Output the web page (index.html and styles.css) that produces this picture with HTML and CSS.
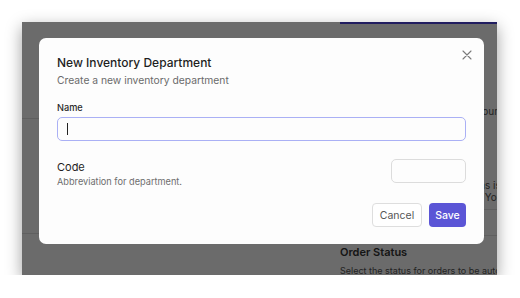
FILE: index.html
```html
<!DOCTYPE html>
<html lang="en">

<head>
    <meta charset="utf-8">
    <meta name="viewport" content="width=device-width, initial-scale=1.0">
    <title>New Inventory Department</title>
    <link rel="stylesheet" href="styles.css">
</head>

<body>
    <div class="vindue">
        <div class="app">
            <div class="venstre">
                <div class="blok1"></div>
                <div class="blok2"></div>
            </div>
            <div class="hoejre">
                <p class="tekst1">Choose the default location for your store</p>
                <p class="tekst2">Notify staff when the stock of items is low.</p>
                <p class="tekst2b">Changes apply immediately. You can</p>
                <div class="skille"></div>
                <h4>Order Status</h4>
                <p class="tekst3">Select the status for orders to be automatically</p>
            </div>
        </div>

        <div class="overlay"></div>

        <section class="dialog">
            <button class="luk" aria-label="Close">
                <svg width="10" height="10" viewBox="0 0 10 10">
                    <path d="M1 1 L9 9 M9 1 L1 9" stroke="#7a7a7a" stroke-width="1.1" fill="none" stroke-linecap="round"/>
                </svg>
            </button>

            <h2>New Inventory Department</h2>
            <p class="under">Create a new inventory department</p>

            <div class="felt">
                <label>Name</label>
                <div class="input fokus"><span class="markoer"></span></div>
            </div>

            <div class="raekke">
                <div class="kodetekst">
                    <h3>Code</h3>
                    <p>Abbreviation for department.</p>
                </div>
                <div class="input kode"></div>
            </div>

            <div class="knapper">
                <button class="annuller">Cancel</button>
                <button class="gem">Save</button>
            </div>
        </section>
    </div>
</body>

</html>
```

FILE: styles.css
```css
body {
    margin: 0;
    background-color: #ffffff;
    font-family: Inter, "Noto Sans", sans-serif;
}

.vindue {
    position: relative;
    width: 475px;
    height: 253px;
    margin: 22px 0 0 22px;
    overflow: hidden;
    box-shadow: 0 5px 15px rgba(0, 0, 0, 0.38);
}

.app {
    display: grid;
    grid-template-columns: 318px 157px;
    height: 100%;
    background-color: #ffffff;
}

.blok1 {
    height: 96px;
    border-bottom: 1px solid #e2e2e2;
}

.blok2 {
    height: 114px;
    border-bottom: 1px solid #e2e2e2;
}

.hoejre {
    border-top: 2px solid #4f46e5;
    overflow: hidden;
    white-space: nowrap;
    color: #555555;
    font-size: 10px;
}

.hoejre p {
    margin: 0;
}

.tekst1 {
    padding-top: 81px;
    line-height: 13px;
    text-indent: -12px;
}

.tekst2 {
    padding-top: 61px;
    line-height: 12px;
    text-indent: -18px;
}

.tekst2b {
    line-height: 12px;
    text-indent: 9px;
}

.skille {
    margin-top: 6px;
    height: 25px;
    border-top: 1px solid #e2e2e2;
    border-bottom: 1px solid #e2e2e2;
}

.hoejre h4 {
    margin: 9px 0 0;
    font-size: 11px;
    line-height: 14px;
    font-weight: 600;
    color: #333333;
}

.tekst3 {
    padding-top: 5px;
    line-height: 13px;
    font-size: 9px;
}

.overlay {
    position: absolute;
    inset: 0;
    background-color: rgba(0, 0, 0, 0.58);
}

.dialog {
    position: absolute;
    left: 17px;
    top: 16px;
    width: 409px;
    padding: 17px 18px 17px;
    background-color: #fdfdfd;
    border-radius: 7px;
}

.luk {
    position: absolute;
    top: 12px;
    right: 12px;
    padding: 0;
    border: none;
    background: none;
    display: flex;
}

h2 {
    margin: 0;
    font-size: 12px;
    line-height: 16px;
    font-weight: 500;
    color: #1f1f1f;
}

.under {
    margin: 2px 0 0;
    font-size: 10.3px;
    line-height: 14px;
    color: #6b6b6b;
}

.felt {
    margin-top: 14px;
    display: flex;
    flex-direction: column;
    gap: 3px;
}

label {
    font-size: 9.2px;
    line-height: 13px;
    font-weight: 500;
    color: #2a2a2a;
}

.input {
    box-sizing: border-box;
    height: 24px;
    border: 1px solid #dcdcdc;
    border-radius: 5px;
    background-color: #fdfdfd;
}

.fokus {
    display: flex;
    align-items: center;
    padding-left: 9px;
    border: 1.5px solid #aab0f5;
}

.markoer {
    width: 1px;
    height: 12px;
    background-color: #222222;
}

.raekke {
    margin-top: 18px;
    display: flex;
    justify-content: space-between;
    align-items: flex-start;
}

.kodetekst {
    padding-top: 1px;
}

h3 {
    margin: 0;
    font-size: 11px;
    line-height: 15px;
    font-weight: 400;
    color: #1f1f1f;
}

.kodetekst p {
    margin: 0;
    font-size: 9.2px;
    line-height: 13px;
    color: #6e6e6e;
}

.kode {
    width: 75px;
}

.knapper {
    margin-top: 15px;
    display: flex;
    justify-content: flex-end;
    gap: 7px;
}

.knapper button {
    height: 24px;
    border-radius: 4px;
    font-family: Inter, "Noto Sans", sans-serif;
    font-size: 10.5px;
}

.annuller {
    width: 50px;
    border: 1px solid #dedede;
    background-color: #ffffff;
    color: #555555;
}

.gem {
    width: 37px;
    border: none;
    background-color: #5b55d6;
    color: #ffffff;
    font-weight: 500;
}
```
